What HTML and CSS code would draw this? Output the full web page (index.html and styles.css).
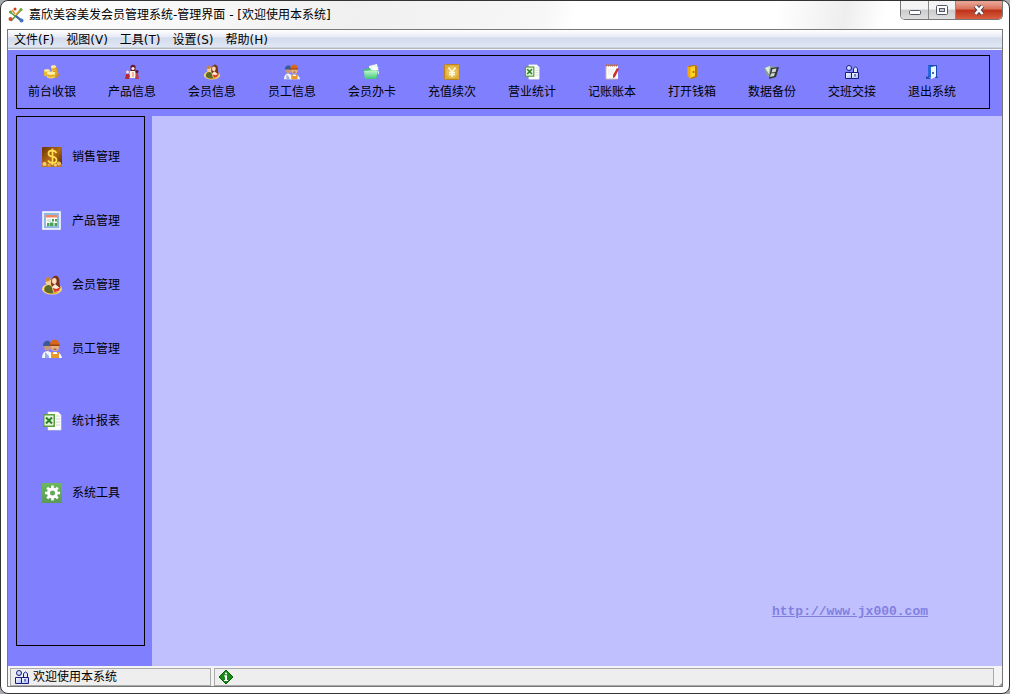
FILE: index.html
```html
<!DOCTYPE html>
<html lang="zh-CN">
<head>
<meta charset="utf-8">
<title>嘉欣美容美发会员管理系统-管理界面</title>
<link rel="stylesheet" href="styles.css">
</head>
<body>
<svg class="sprite" aria-hidden="true">
  <defs>
    <linearGradient id="gold" x1="0" y1="0" x2="1" y2="1"><stop offset="0" stop-color="#ffe98a"/><stop offset=".5" stop-color="#f0b92c"/><stop offset="1" stop-color="#b87808"/></linearGradient>
    <linearGradient id="mint" x1="0" y1="0" x2="0" y2="1"><stop offset="0" stop-color="#c9f8d8"/><stop offset="1" stop-color="#3fc878"/></linearGradient>
    <linearGradient id="bronze" x1="0" y1="0" x2="1" y2="1"><stop offset="0" stop-color="#6a3408"/><stop offset=".5" stop-color="#b06a14"/><stop offset="1" stop-color="#4a2004"/></linearGradient>
    <linearGradient id="leaf" x1="0" y1="0" x2="0" y2="1"><stop offset="0" stop-color="#6cb85c"/><stop offset="1" stop-color="#5a9a58"/></linearGradient>
    <linearGradient id="blue" x1="0" y1="0" x2="1" y2="1"><stop offset="0" stop-color="#fff"/><stop offset="1" stop-color="#a8b8f8"/></linearGradient>
  </defs>
  <symbol id="members" viewBox="0 0 20 20">
    <ellipse cx="10" cy="14" rx="10" ry="5.500" fill="#f8dc78"/><ellipse cx="10" cy="14.500" rx="8" ry="4.500" fill="#e0a830"/>
    <path d="M2.500 16q-1-6 4.500-6 4 1 4 8-5 1-8.500-2z" fill="#5a6a28"/>
    <circle cx="6.500" cy="7" r="3" fill="#f5cc9c"/><path d="M3 7q0-5 4-5l2 2-2 2z" fill="#c88838"/>
    <path d="M9 9q0-8 5-8.500 4 1 3.500 8l1 5-8-1z" fill="#7a341c"/><ellipse cx="12.300" cy="6" rx="2.300" ry="3" fill="#ffdcb8"/>
    <path d="M10 12l3-3 5 4-2 4-5-1z" fill="#ffe8d0"/><path d="M10.500 13l4 1 4-2-2 4-4 1z" fill="#d83828"/>
  </symbol>
  <symbol id="workers" viewBox="0 0 20 20">
    <circle cx="5.500" cy="8" r="3.500" fill="#c89878"/><path d="M1 7q0-5 5-5.500 3 1 3 5.500z" fill="#3a5a98"/>
    <path d="M0 19q0-7 6-7l4 2v5z" fill="#f4f4fa"/><path d="M3 13l4 4v2H3z" fill="#98b0d8"/>
    <circle cx="13" cy="8" r="4" fill="#e8b080"/><path d="M8 6q0-5 5-5.500Q17 1 17.500 6z" fill="#d86818"/><path d="M7.500 5.500h10V7h-10z" fill="#984010"/>
    <path d="M7 19q0-6 6-6t7 6z" fill="#fff"/><path d="M9 13h2v2h4v-2h2v6H9z" fill="#e89828"/><path d="M11 10q2-1 4 0-2 2-4 0z" fill="#885838"/>
  </symbol>
  <symbol id="sheet" viewBox="0 0 20 20">
    <path d="M6 1h10l3 3v15H6z" fill="#fff" stroke="#dce8dc" stroke-width=".6"/><path d="M14 5h4M14 8h4M14 11h4M14 14h4" stroke="#c8d8c8"/>
    <rect x="1" y="3" width="12" height="13" fill="#5aa03c"/><rect x="2.500" y="4.500" width="9" height="10" fill="#e8f4dc"/>
    <path d="M4 6.500l6 6M10 6.500l-6 6" stroke="#2a8028" stroke-width="2"/>
  </symbol>
  <symbol id="userlock" viewBox="0 0 16 16">
    <g fill="url(#blue)" stroke="#181c80"><circle cx="5" cy="4" r="2.500"/><path d="M1.500 14.500v-6h6v6z"/><path d="M9.500 8.500v-4q2-3 4 0v4" fill="#e0e8ff"/><path d="M7.500 8.500h7v6h-7z"/></g><path d="M11 10v2.500" stroke="#181c80"/>
  </symbol>
</svg>

<div class="window">
  <header class="titlebar">
    <svg class="icon-small" viewBox="0 0 16 16">
      <path d="M2 5l10 8M13 3L3 14" stroke="#4c9a3c" stroke-width="1.500"/>
      <path d="M7 7l-3-4M8 8l4-5" stroke="#e09030" stroke-width="1.500"/>
      <path d="M8 9l5 4" stroke="#3c60b8" stroke-width="2"/>
      <circle cx="7" cy="2" r="1.500" fill="#c84020"/><circle cx="13" cy="2.500" r="1.500" fill="#68a838"/>
      <circle cx="2.500" cy="12" r="2" fill="#d84828"/><circle cx="13.500" cy="13.500" r="2" fill="#4870c8"/><circle cx="2.500" cy="5" r="1.500" fill="#58a048"/>
    </svg>
    <h1 class="title">嘉欣美容美发会员管理系统-管理界面 - [欢迎使用本系统]</h1>
    <div class="controls">
      <button class="control" aria-label="最小化"><svg class="control-icon" viewBox="0 0 14 12"><rect x="1.500" y="6.500" width="11" height="4" rx="1" fill="#fff" stroke="#555868"/></svg></button>
      <button class="control control-max" aria-label="最大化"><svg class="control-icon" viewBox="0 0 14 12"><rect x="1.500" y="1.500" width="11" height="9" rx="1" fill="#fff" stroke="#555868"/><rect x="4.500" y="4.500" width="5" height="3" fill="#ccc" stroke="#555868"/></svg></button>
      <button class="control control-close" aria-label="关闭"><svg class="control-icon" viewBox="0 0 14 12"><path d="M3.500 2l7 8M10.500 2l-7 8" stroke="#54424c" stroke-width="4.500"/><path d="M3.500 2l7 8M10.500 2l-7 8" stroke="#fff" stroke-width="2.600"/></svg></button>
    </div>
  </header>
  <div class="client">
    <nav class="menubar" aria-label="菜单">
      <button class="menu">文件(F)</button><button class="menu">视图(V)</button><button class="menu">工具(T)</button><button class="menu">设置(S)</button><button class="menu">帮助(H)</button>
    </nav>
    <div class="workspace">
      <div class="toolbar">
        <button class="tool"><svg class="icon-small" viewBox="0 0 16 16">
          <path d="M7 2.500q2.500-2 5 0l3 9-2 2.500-4-2z" fill="url(#gold)"/><ellipse cx="9.500" cy="2.500" rx="2.500" ry="1.300" fill="#fff0a0"/>
          <path d="M0 6.500q3-2 6 0v5q-3 2-6 0z" fill="#e8b838"/><ellipse cx="3" cy="6.500" rx="3" ry="1.300" fill="#fff0a0"/>
          <path d="M3 9q4-2 8 0v4.500q-4 2-8 0z" fill="#f6cf50"/><ellipse cx="7" cy="9" rx="4" ry="1.500" fill="#fff2a8"/>
          <path d="M3.500 11.500q3.500 1.500 7 0M8 5.500l5-1M9 7.500l5-1" fill="none" stroke="#c88a18" stroke-width=".8"/>
        </svg>前台收银</button>
        <button class="tool"><svg class="icon-small" viewBox="0 0 16 16">
          <path d="M6.500 2q2.500-2.500 5 0v5h-5z" fill="#6a1828"/><circle cx="9" cy="4.500" r="1.600" fill="#fff0e0"/>
          <path d="M6 7h5l1 7H5z" fill="#fff0e8"/><path d="M8 8h2v5H8z" fill="#e8b8a0"/>
          <circle cx="3.500" cy="8" r="1.500" fill="#ffe0c8"/><path d="M1 15l1-5h3l1 2-1 3z" fill="#b82838"/>
          <circle cx="13" cy="7.500" r="1.500" fill="#501828"/><path d="M11 15l1-6h2l1 6z" fill="#b84050"/>
        </svg>产品信息</button>
        <button class="tool"><svg class="icon-small"><use href="#members"/></svg>会员信息</button>
        <button class="tool"><svg class="icon-small"><use href="#workers"/></svg>员工信息</button>
        <button class="tool"><svg class="icon-small" viewBox="0 0 16 16">
          <path d="M5 2l8-2 2 10-9 2z" fill="#f4fff8"/><path d="M8 1l6 2v7l-6 1z" fill="#fff" stroke="#b8e8c8" stroke-width=".5"/>
          <path d="M0 5h3l1-1h2l1 2h7v6l-2 3H1z" fill="#48c078"/><path d="M0 7l12-1 2 1-2 7-11 1z" fill="url(#mint)"/>
        </svg>会员办卡</button>
        <button class="tool"><svg class="icon-small" viewBox="0 0 16 16">
          <rect x=".5" y=".5" width="15" height="15" rx="1" fill="#e0aa38" stroke="#b98520"/><circle cx="8" cy="8" r="6" fill="#ecc058"/>
          <path d="M4.500 3.500L8 8l3.500-4.500M8 8v5M5 8.500h6M5 10.500h6" fill="none" stroke="#fffbe0" stroke-width="1.400"/>
        </svg>充值续次</button>
        <button class="tool"><svg class="icon-small"><use href="#sheet"/></svg>营业统计</button>
        <button class="tool"><svg class="icon-small" viewBox="0 0 16 16">
          <path d="M2 2h12v13H2z" fill="#fffefa"/><path d="M2 2v13h11" fill="none" stroke="#c8b8b8"/>
          <path d="M2 1.500h12" stroke="#b86848" stroke-dasharray="1 1" stroke-width="2"/><path d="M4 6h6M4 8h5M4 10h4" stroke="#e0dcd8" stroke-width=".6"/>
          <path d="M13 4l2 1-4 8-2 1v-3z" fill="#c83028"/>
        </svg>记账账本</button>
        <button class="tool"><svg class="icon-small" viewBox="0 0 16 16">
          <path d="M4 2l7-1 2 1v11l-6 2-3-3z" fill="#b87808"/><path d="M6 3l5-1v10l-5 2z" fill="#ffd428"/><path d="M3.500 2l3 1.500V15l-3-3z" fill="#f0a818"/>
          <circle cx="9.500" cy="8" r="1" fill="#a86000"/>
        </svg>打开钱箱</button>
        <button class="tool"><svg class="icon-small" viewBox="0 0 16 16">
          <path d="M0 4l6-2 6 1-4 11-5-2z" fill="#8aa090"/><path d="M1 4l5-2-1 8z" fill="#e0eee0"/>
          <path d="M7 4l8-1-3 10-7 2z" fill="#303838"/><path d="M8.500 5l4-.5-1 3.500-4 .5zM7 9.500l4-.5-1 3-4 1z" fill="#d0d8d0"/>
        </svg>数据备份</button>
        <button class="tool"><svg class="icon-small"><use href="#userlock"/></svg>交班交接</button>
        <button class="tool"><svg class="icon-small" viewBox="0 0 16 16">
          <path d="M4 1h9v12H4z" fill="#1848b0"/><path d="M4 1l4 2v11l-4-2z" fill="#2868d8"/><path d="M7 3l5-1v11l-5 2z" fill="#e8faff"/>
          <path d="M2 12l4 2v1H2zM12 12l2 1v1h-3z" fill="#2050a8"/><circle cx="9" cy="9" r="1" fill="#183888"/>
        </svg>退出系统</button>
      </div>
      <div class="columns">
        <nav class="sidebar" aria-label="功能">
          <button class="side"><svg class="icon-large" viewBox="0 0 20 20">
            <rect width="20" height="20" rx="1" fill="url(#bronze)"/><path d="M0 16l3-2 3 3 3-2 3 2 4-3 4 3v3H0z" fill="#b87828"/>
            <circle cx="2.500" cy="17" r="2" fill="#f4cc70"/><circle cx="7" cy="18" r="1.500" fill="#e0a850"/><circle cx="17" cy="16.500" r="2" fill="#f0bc58"/><circle cx="13.500" cy="18" r="1.500" fill="#f4cc70"/>
            <path d="M14.500 6Q13 3.500 10.500 3.500q-4 0-4 3 0 2.500 4 3.200 4 .8 4 3.300 0 3-4 3-3 0-4.500-2.500M10.500 1.500v16.500" fill="none" stroke="#ffdc50" stroke-width="1.800"/>
          </svg>销售管理</button>
          <button class="side"><svg class="icon-large" viewBox="0 0 20 20">
            <rect x="1" y="1" width="17" height="17" fill="#90b8e0" stroke="#fff" stroke-width="1.500"/><rect x="4" y="4" width="11" height="11" fill="#fff"/><path d="M4 4h11v2.500H4z" fill="#f08860"/>
            <path d="M10 8h2v2.500h-2zM13 8h2v2.500h-2zM5 12h2.500v3H5zM8 11.500h3.500V15H8zM12.500 12H15v3h-2.500z" fill="#48a058"/><path d="M5 8h4v3H5z" fill="#d0e8d8"/>
          </svg>产品管理</button>
          <button class="side"><svg class="icon-large"><use href="#members"/></svg>会员管理</button>
          <button class="side"><svg class="icon-large"><use href="#workers"/></svg>员工管理</button>
          <button class="side side-spaced"><svg class="icon-large"><use href="#sheet"/></svg>统计报表</button>
          <button class="side side-spaced"><svg class="icon-large" viewBox="0 0 20 20">
            <rect width="20" height="20" fill="url(#leaf)"/><circle cx="10.500" cy="10" r="4" fill="none" stroke="#fff" stroke-width="3"/>
            <path d="M10.500 2.500V6M10.500 14v3.500M3 10h3.500M14.500 10H18M5.200 4.700L8 7.500M13 12.500l2.800 2.800M15.800 4.700L13 7.500M8 12.500l-2.800 2.800" stroke="#fff" stroke-width="2.600"/>
          </svg>系统工具</button>
        </nav>
        <main class="content"><a class="site" href="http://www.jx000.com">http://www.jx000.com</a></main>
      </div>
    </div>
    <footer class="statusbar">
      <div class="status status-user"><svg class="icon-small"><use href="#userlock"/></svg>欢迎使用本系统</div>
      <div class="status status-info"><svg class="icon-small" viewBox="0 0 16 16">
        <path d="M8 1l7 7-7 7-7-7z" fill="#188818" stroke="#086008"/><rect x="7" y="6.500" width="2" height="5.500" fill="#fff"/><path d="M6 6.500h3v1H6zM6 11h4v1H6z" fill="#fff"/><circle cx="8" cy="4.500" r="1.100" fill="#fff"/>
      </svg></div>
      <svg class="grip" viewBox="0 0 8 8"><path d="M8 3v5H3z" fill="#999"/></svg>
    </footer>
  </div>
</div>
</body>
</html>
```

FILE: styles.css
```css
* { box-sizing: border-box; }
body {
  margin: 0;
  background: #a8a8b0;
  color: #000;
  font: 12px/16px "Open Sans", "Noto Sans CJK SC", sans-serif;
}
button {
  margin: 0;
  padding: 0;
  border: 0;
  background: none;
  color: inherit;
  font: inherit;
}
.sprite { position: absolute; width: 0; height: 0; }
.icon-small { width: 16px; height: 16px; flex: none; }
.icon-large { width: 20px; height: 20px; flex: none; }

.window {
  display: flex;
  flex-direction: column;
  min-height: 100vh;
  padding: 0 6px 6px;
  border: 1px solid #333;
  border-radius: 8px;
  background: #fff;
}
.titlebar {
  display: flex;
  align-items: center;
  gap: 5px;
  height: 28px;
  padding-left: 1px;
  background: linear-gradient(100deg, #fff 0%, #f0f0f0 35%, #f7f7f7 54%, #fff 57%, #fff 77%, #eee 84%, #fff 88%);
}
.title, .menubar { font-family: "DejaVu Sans", "Noto Sans CJK SC", sans-serif; }
.title { flex: 1; margin: 0; font-size: 12px; font-weight: normal; line-height: 16px; }
.controls {
  display: flex;
  align-self: flex-start;
  height: 19px;
  border: 1px solid #777;
  border-top: 0;
  border-radius: 0 0 5px 5px;
  overflow: hidden;
}
.control {
  display: grid;
  place-items: center;
  width: 28px;
  border-right: 1px solid #888;
  background: linear-gradient(#f4f4f4 0 45%, #ccc 50%, #dedede);
}
.control-max { width: 27px; }
.control-close { width: 46px; border: 0; background: linear-gradient(#e8a090 0 10%, #d87058 45%, #bd3018 50%, #d86040); }
.control-icon { width: 14px; height: 12px; }

.client { flex: 1; display: flex; flex-direction: column; border: 1px solid #777; }
.menubar {
  display: flex;
  gap: 12px;
  height: 20px;
  padding-left: 6px;
  border-bottom: 1px solid #f4f4fa;
  background: linear-gradient(#fff, #e8ebf5 35%, #d4dcec 42%, #dfe6f4 90%, #b0b8c0 95%);
}
.menu { white-space: nowrap; }

.workspace { flex: 1; display: flex; flex-direction: column; gap: 7px; padding-top: 5px; background: #8080ff; }
.toolbar { display: flex; gap: 10px; margin: 0 12px 0 8px; padding: 8px 0; border: 1px solid #000; }
.tool {
  display: flex;
  flex-direction: column;
  align-items: center;
  gap: 4px;
  width: 70px;
  white-space: nowrap;
}
.columns { flex: 1; display: grid; grid-template-columns: 144px 1fr; }
.sidebar {
  display: flex;
  flex-direction: column;
  margin: 0 7px 20px 8px;
  padding-top: 8px;
  border: 1px solid #000;
}
.side { display: flex; align-items: center; gap: 10px; height: 64px; padding-left: 25px; }
.side-spaced { margin-top: 8px; }
.content {
  display: flex;
  align-items: flex-end;
  justify-content: flex-end;
  padding: 0 74px 46px;
  background: #c0c0ff;
}
.site { color: #8080e0; font: bold 13px/16px "Liberation Mono", monospace; }

.statusbar { display: flex; height: 20px; gap: 3px; padding: 2px 0 0 2px; background: #f4f4f4; }
.status { display: flex; align-items: center; gap: 3px; padding-left: 3px; border: 1px solid #aaa; background: #eee; }
.status-user { width: 201px; }
.status-info { flex: 1; }
.grip { width: 5px; height: 5px; align-self: flex-end; }
```
